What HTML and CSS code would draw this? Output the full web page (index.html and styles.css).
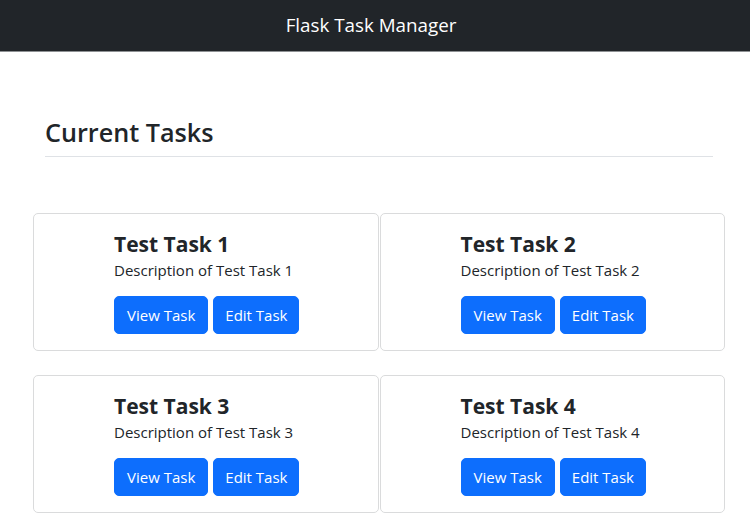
FILE: index.html
```html
<!DOCTYPE html>
<html lang="en">
<head>
<meta charset="utf-8">
<title>Flask Task Manager</title>
<link rel="stylesheet" href="styles.css">
</head>
<body>
<nav class="navbar">
  <span class="brand">Flask Task Manager</span>
</nav>
<main class="page">
  <section class="header">
    <h2 class="title">Current Tasks</h2>
    <hr class="rule">
  </section>
  <section class="grid">
    <div class="card">
      <div class="card-body">
        <h4 class="card-title">Test Task 1</h4>
        <p class="card-text">Description of Test Task 1</p>
        <div class="actions"><a class="btn">View Task</a><a class="btn">Edit Task</a></div>
      </div>
    </div>
    <div class="card">
      <div class="card-body">
        <h4 class="card-title">Test Task 2</h4>
        <p class="card-text">Description of Test Task 2</p>
        <div class="actions"><a class="btn">View Task</a><a class="btn">Edit Task</a></div>
      </div>
    </div>
    <div class="card">
      <div class="card-body">
        <h4 class="card-title">Test Task 3</h4>
        <p class="card-text">Description of Test Task 3</p>
        <div class="actions"><a class="btn">View Task</a><a class="btn">Edit Task</a></div>
      </div>
    </div>
    <div class="card">
      <div class="card-body">
        <h4 class="card-title">Test Task 4</h4>
        <p class="card-text">Description of Test Task 4</p>
        <div class="actions"><a class="btn">View Task</a><a class="btn">Edit Task</a></div>
      </div>
    </div>
  </section>
</main>
</body>
</html>
```
FILE: styles.css
```css
* { box-sizing: border-box; }
html, body { margin: 0; padding: 0; background: #fff; }
body {
  font-family: "Open Sans", "Noto Sans", sans-serif;
  color: #212529;
  font-size: 16px;
  line-height: 1.5;
}
.navbar {
  height: 52px;
  background: #212529;
  border-bottom: 1px solid #8e9194;
  display: flex;
  align-items: center;
  justify-content: center;
  padding-right: 8px;
}
.brand {
  color: #fff;
  font-size: 18.8px;
  line-height: 1;
}
.page {
  padding: 63px 25px 0 33px;
}
.header {
  padding: 0 12px;
}
.title {
  margin: 0;
  font-size: 25.2px;
  font-weight: 600;
  line-height: 34px;
  color: #212529;
}
.rule {
  margin: 7px 0 0 0;
  border: 0;
  border-top: 1px solid #dfe2e6;
}
.grid {
  margin-top: 56px;
  display: grid;
  grid-template-columns: 1fr 1fr;
  column-gap: 1px;
  row-gap: 24px;
}
.card {
  border: 1px solid #dadbdc;
  border-radius: 5px;
  background: #fff;
}
.card-body {
  padding: 17px 16px 16px 80px;
}
.card-title {
  margin: 0;
  font-size: 21px;
  font-weight: 700;
  line-height: 27px;
  color: #212529;
}
.card-text {
  margin: 0 0 14px 0;
  font-size: 15px;
  line-height: 24px;
  color: #212529;
}
.actions {
  display: flex;
  gap: 5px;
}
.btn {
  display: inline-block;
  background: #0d6efd;
  color: #fff;
  font-size: 15px;
  line-height: 24px;
  padding: 6px 12px 6px 12px;
  border: 1px solid #0d6efd;
  border-radius: 5px;
  text-decoration: none;
}
.btn + .btn {
  padding: 6px 11px;
}
```
